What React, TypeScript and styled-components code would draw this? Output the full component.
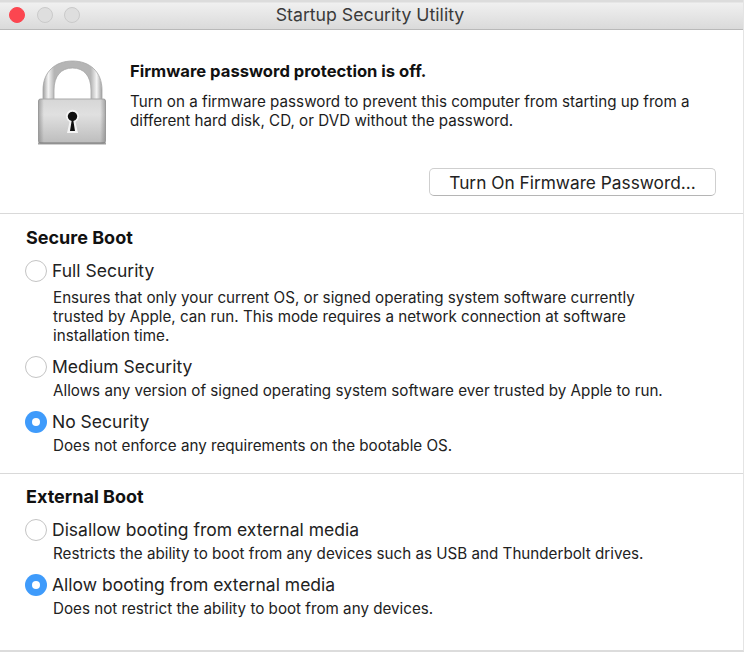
import React from "react";
import styled, { createGlobalStyle } from "styled-components";

const GlobalStyle = createGlobalStyle`
  html, body {
    margin: 0;
    padding: 0;
    background: #fff;
  }
  body {
    font-family: Inter, "Liberation Sans", Arial, sans-serif;
    color: #1c1c1c;
  }
`;

const Win = styled.div`
  width: 744px;
  height: 652px;
  box-sizing: border-box;
  background: #fff;
  border-bottom: 2px solid #dcdcdc;
  border-right: 1px solid #e4e4e4;
  overflow: hidden;
`;

const TitleBar = styled.header`
  height: 30px;
  box-sizing: border-box;
  position: relative;
  display: flex;
  align-items: center;
  justify-content: center;
  background: linear-gradient(#dcdcdc, #dcdcdc 2px, #f0f0f0 3px, #dadada);
  border-bottom: 1px solid #b9b9b9;
`;

const Lights = styled.div`
  position: absolute;
  left: 9px;
  top: 7px;
  display: flex;
  gap: 11.5px;
`;

const Light = styled.span<{ $on?: boolean }>`
  width: 16px;
  height: 16px;
  border-radius: 50%;
  box-sizing: border-box;
  background: ${(p) => (p.$on ? "#fc4650" : "#dedede")};
  border: 1px solid ${(p) => (p.$on ? "#fc4650" : "#cacaca")};
`;

const Title = styled.div`
  font-size: 17.7px;
  color: #3a3a3a;
  margin-left: -3px;
`;

const Top = styled.section`
  height: 184px;
  box-sizing: border-box;
  padding: 31px 27px 0 38px;
  border-bottom: 1px solid #d9d9d9;
  display: flex;
  flex-direction: column;
`;

const Intro = styled.div`
  display: flex;
  gap: 24px;
`;

const IntroText = styled.div`
  padding-top: 0;
`;

const Headline = styled.div`
  font-size: 16.6px;
  font-weight: 700;
  line-height: 20px;
  color: #111;
  margin-bottom: 11px;
`;

const Body = styled.div`
  font-size: 15.2px;
  line-height: 19px;
  width: 600px;
  white-space: nowrap;
`;

const Btn = styled.button`
  align-self: flex-end;
  margin-top: 23px;
  width: 287px;
  height: 28px;
  padding: 0;
  box-sizing: border-box;
  font-family: inherit;
  font-size: 17.3px;
  color: #222;
  background: #fff;
  border: 1px solid #cfcfcf;
  border-bottom-color: #b5b5b5;
  border-radius: 5px;
`;

const Section = styled.section<{ $line?: boolean; $h: number; $top: number }>`
  height: ${(p) => p.$h}px;
  box-sizing: border-box;
  padding: ${(p) => p.$top}px 0 0 26px;
  border-bottom: ${(p) => (p.$line ? "1px solid #d9d9d9" : "none")};
`;

const SectionTitle = styled.div`
  font-size: 18px;
  font-weight: 700;
  line-height: 20px;
  color: #111;
  margin-bottom: 12px;
`;

const Option = styled.div`
  display: grid;
  grid-template-columns: 22px 1fr;
  column-gap: 5px;
  align-items: center;
  margin-bottom: 11px;
  margin-left: -1px;
`;

const Radio = styled.span<{ $on?: boolean }>`
  width: 22px;
  height: 22px;
  box-sizing: border-box;
  border-radius: 50%;
  background: ${(p) => (p.$on ? "#3f9bfb" : "#fff")};
  border: ${(p) => (p.$on ? "none" : "1.5px solid #c4c4c4")};
  display: flex;
  align-items: center;
  justify-content: center;
  &::after {
    content: "";
    display: ${(p) => (p.$on ? "block" : "none")};
    width: 8px;
    height: 8px;
    border-radius: 50%;
    background: #fff;
  }
`;

const OptionLabel = styled.div`
  font-size: 17.5px;
  line-height: 22px;
  color: #222;
`;

const OptionNote = styled.div<{ $gap: number }>`
  grid-column: 2;
  font-size: 15.2px;
  line-height: 19px;
  margin-top: ${(p) => p.$gap}px;
  margin-left: 1px;
  color: #222;
  white-space: nowrap;
`;

const Lock = () => (
  <svg width="68" height="85" viewBox="0 0 68 85" style={{ flex: "none", marginTop: -1 }}>
    <defs>
      <linearGradient id="shackle" x1="0" x2="1" y1="0" y2="0">
        <stop offset="0" stopColor="#a0a0a0" />
        <stop offset="0.09" stopColor="#f4f4f4" />
        <stop offset="0.19" stopColor="#b5b5b5" />
        <stop offset="0.81" stopColor="#b5b5b5" />
        <stop offset="0.91" stopColor="#f4f4f4" />
        <stop offset="1" stopColor="#a0a0a0" />
      </linearGradient>
      <linearGradient id="lockBody" x1="0" x2="0" y1="0" y2="1">
        <stop offset="0" stopColor="#d6d6d6" />
        <stop offset="0.35" stopColor="#e0e0e0" />
        <stop offset="1" stopColor="#bdbdbd" />
      </linearGradient>
      <linearGradient id="lockEdge" x1="0" x2="1" y1="0" y2="0">
        <stop offset="0" stopColor="#777" stopOpacity="0.55" />
        <stop offset="0.08" stopColor="#777" stopOpacity="0" />
        <stop offset="0.92" stopColor="#777" stopOpacity="0" />
        <stop offset="1" stopColor="#777" stopOpacity="0.55" />
      </linearGradient>
    </defs>
    <path d="M5 42V30C5 12 17 1 34.5 1S64 12 64 30v12H53V30c0-14-7-22-18.5-22S16 16 16 30v12z" fill="url(#shackle)" stroke="#a5a5a5" strokeWidth="0.8" />
    <rect x="0.5" y="39" width="67" height="44" rx="2" fill="url(#lockBody)" stroke="#a8a8a8" />
    <rect x="0.5" y="39" width="67" height="44" rx="2" fill="url(#lockEdge)" />
    <rect x="0" y="82.5" width="68" height="2" fill="#666" opacity="0.6" />
    <path d="M29 73l2.5-11a6.5 6.5 0 1 1 6 0L40 73z" fill="#f4f4f4" />
    <path d="M32 71l1.6-10a4.7 4.7 0 1 1 1.8 0L37 71z" fill="#111" />
  </svg>
);

const Choice = ({ on, label, note, gap = 3 }: { on?: boolean; label: string; note: React.ReactNode; gap?: number }) => (
  <Option>
    <Radio $on={on} />
    <OptionLabel>{label}</OptionLabel>
    <OptionNote $gap={gap}>{note}</OptionNote>
  </Option>
);

export default function App() {
  return (
    <Win>
      <GlobalStyle />
      <TitleBar>
        <Lights>
          <Light $on />
          <Light />
          <Light />
        </Lights>
        <Title>Startup Security Utility</Title>
      </TitleBar>
      <Top>
        <Intro>
          <Lock />
          <IntroText>
            <Headline>Firmware password protection is off.</Headline>
            <Body>
              Turn on a firmware password to prevent this computer from starting up from a
              <br />
              different hard disk, CD, or DVD without the password.
            </Body>
          </IntroText>
        </Intro>
        <Btn>Turn On Firmware Password...</Btn>
      </Top>
      <Section $line $h={260} $top={14}>
        <SectionTitle>Secure Boot</SectionTitle>
        <Choice
          gap={6}
          label="Full Security"
          note={
            <>
              Ensures that only your current OS, or signed operating system software currently
              <br />
              trusted by Apple, can run. This mode requires a network connection at software
              <br />
              installation time.
            </>
          }
        />
        <Choice label="Medium Security" note="Allows any version of signed operating system software ever trusted by Apple to run." />
        <Choice on label="No Security" note="Does not enforce any requirements on the bootable OS." />
      </Section>
      <Section $h={176} $top={13}>
        <SectionTitle>External Boot</SectionTitle>
        <Choice label="Disallow booting from external media" note="Restricts the ability to boot from any devices such as USB and Thunderbolt drives." />
        <Choice on label="Allow booting from external media" note="Does not restrict the ability to boot from any devices." />
      </Section>
    </Win>
  );
}
